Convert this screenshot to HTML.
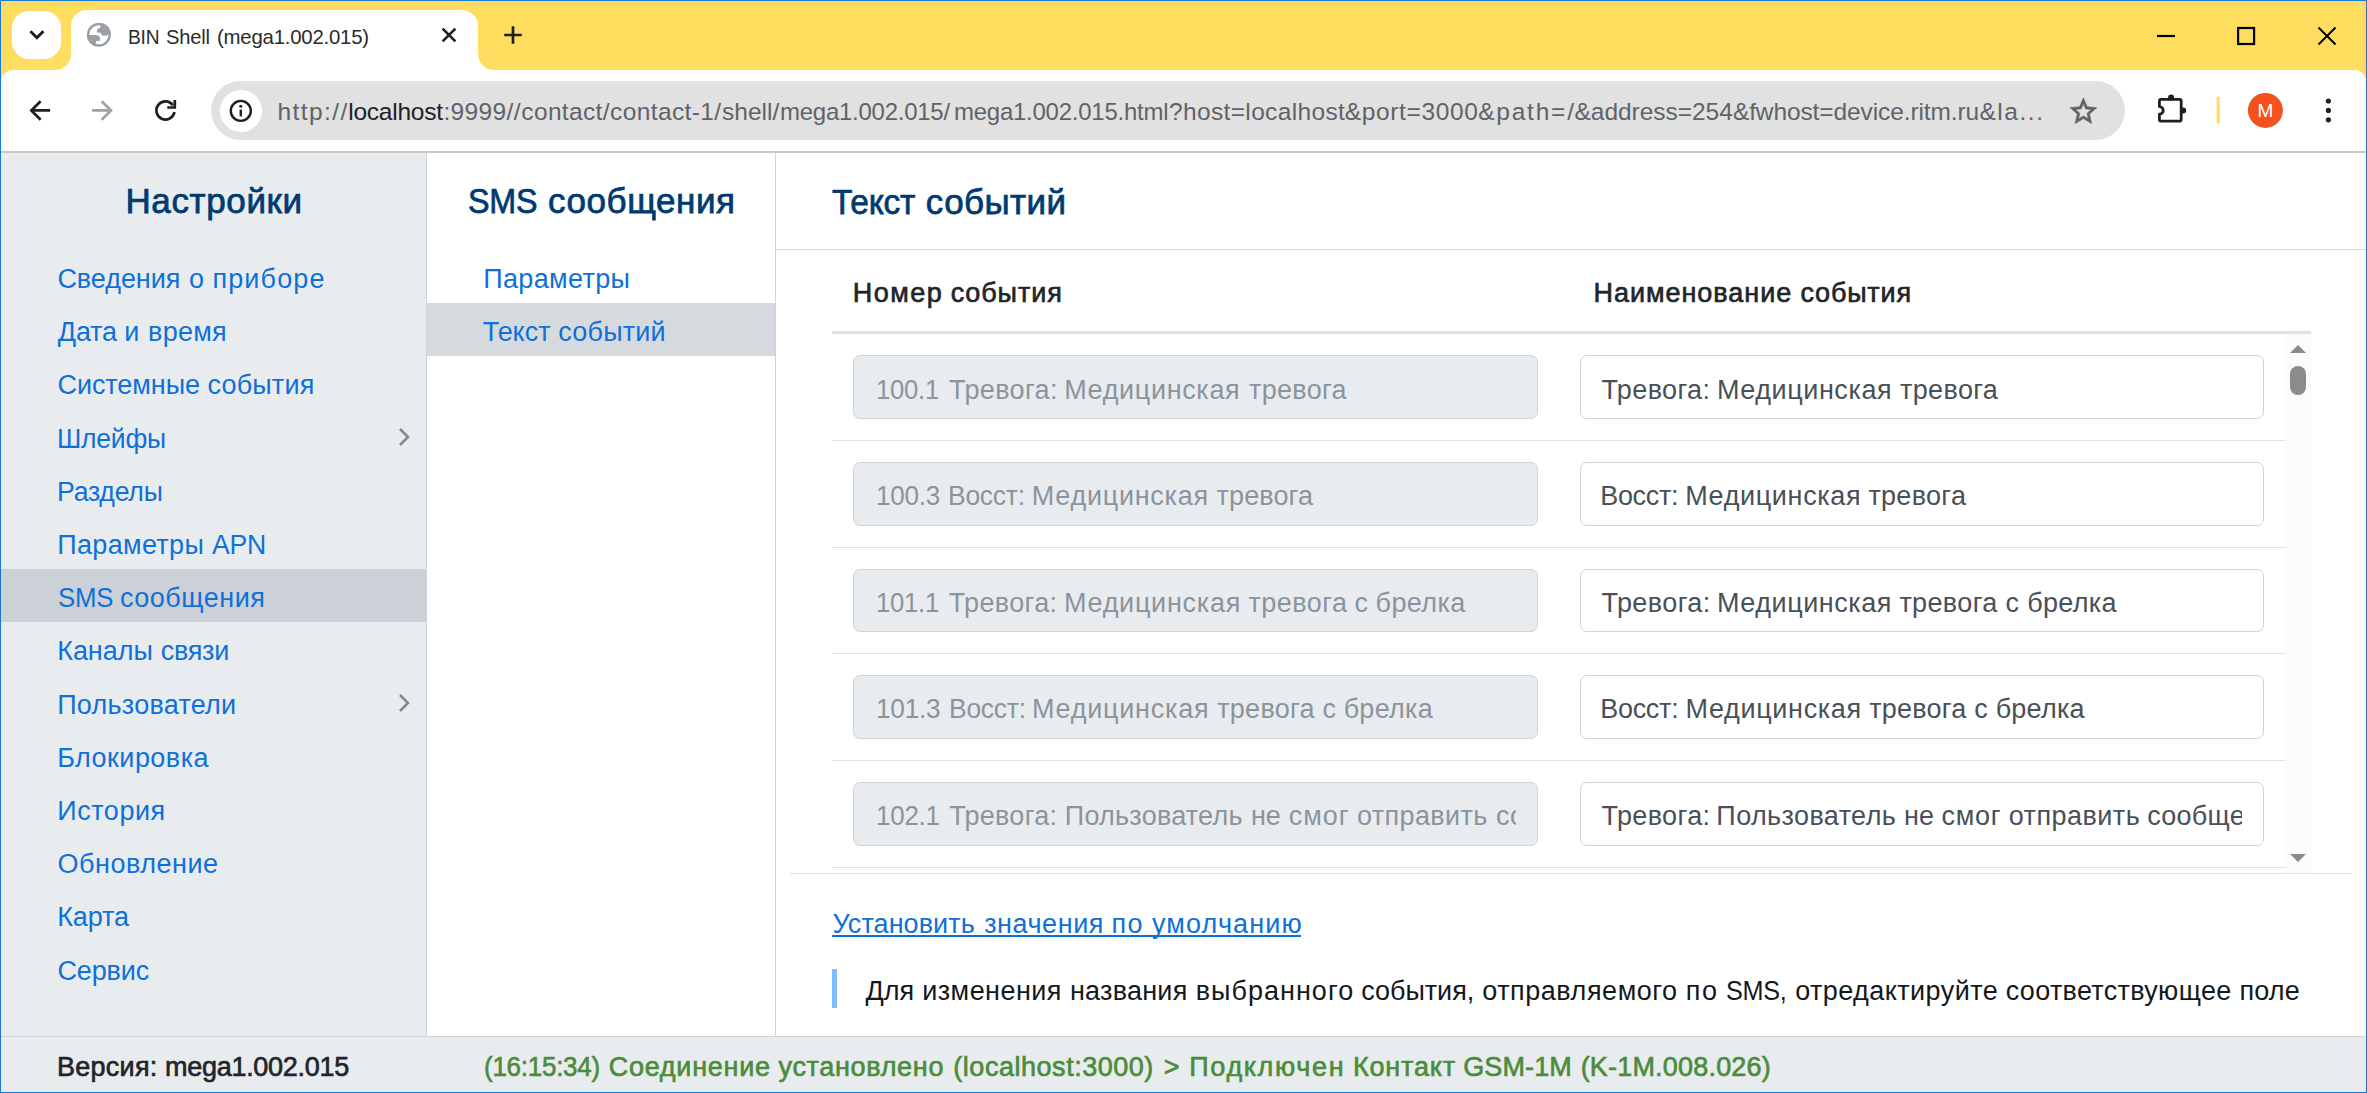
<!DOCTYPE html>
<html lang="ru">
<head>
<meta charset="utf-8">
<title>BIN Shell (mega1.002.015)</title>
<style>
*{box-sizing:border-box;margin:0;padding:0}
html,body{width:2367px;height:1093px;overflow:hidden;background:#fff}
body{position:relative;font-family:"Liberation Sans","DejaVu Sans",sans-serif;font-size:27px;color:#212529}
.abs{position:absolute}
.t{position:absolute;white-space:nowrap;line-height:1;transform-origin:0 0}
/* chrome */
#frame{position:absolute;left:0;top:0;width:2367px;height:1093px;border:1px solid #1878d2;border-top-width:1px;pointer-events:none;z-index:50}
#tabstrip{position:absolute;left:0;top:0;width:2367px;height:100px;background:#ffde5f}
#toolbar{position:absolute;left:1px;top:70px;width:2365px;height:81px;background:#fff;border-radius:12px 12px 0 0}
#tbline{position:absolute;left:1px;top:151px;width:2365px;height:2px;background:#c8c8c8}
#tabsearch{position:absolute;left:12px;top:11px;width:49px;height:48px;background:#fff;border-radius:17px}
#tab{position:absolute;left:71px;top:10px;width:407px;height:60px;background:#fff;border-radius:16px 16px 0 0}
.tabfoot{position:absolute;top:54px;width:16px;height:16px;background:radial-gradient(circle at var(--cx) 0,#ffde5f 15.5px,#fff 16.5px)}
#omni{position:absolute;left:211px;top:81px;width:1914px;height:59px;border-radius:30px;background:#e1e1e1}
#info{position:absolute;left:220px;top:90px;width:42px;height:42px;border-radius:50%;background:#fff}
/* app */
#side1{position:absolute;left:1px;top:153px;width:425px;height:883px;background:#e9ecef}
#side1b{position:absolute;left:426px;top:153px;width:1px;height:939px;background:#ced4da}
#side2b{position:absolute;left:775px;top:153px;width:1px;height:883px;background:#ced4da}
#sel1{position:absolute;left:1px;top:569px;width:425px;height:53px;background:#ccd0d7}
#sel2{position:absolute;left:427px;top:303px;width:348px;height:53px;background:#d6d9de}
#footer{position:absolute;left:1px;top:1036px;width:2365px;height:56px;background:#e9ecef;border-top:1px solid #ced4da}
.ln{position:static}
.inp{position:absolute;height:63.5px;border:1px solid #ced4da;border-radius:7px;background:#fff;overflow:hidden}
.inp.dis{background:#e9ecef}
.inp .clip{position:absolute;left:0;top:0;right:21px;bottom:0;overflow:hidden}
.rowline{position:absolute;left:832px;width:1453px;height:1px;background:#dee2e6}
</style>
</head>
<body>
<div id="tabstrip"></div>
<div id="toolbar"></div>
<div id="tbline"></div>
<div id="tabsearch"></div>
<div id="tab"></div>
<div class="tabfoot" style="left:55px;--cx:0px"></div>
<div class="tabfoot" style="left:478px;--cx:16px"></div>
<div id="omni"></div>
<div id="info"></div>
<svg class="abs" style="left:0;top:0" width="2367" height="153" viewBox="0 0 2367 153" fill="none" stroke-linecap="butt">
<!-- tab search chevron -->
<path d="M30.4 31.2 L36.9 37.7 L43.4 31.2" stroke="#1f1f1f" stroke-width="3"/>
<!-- favicon globe -->
<clipPath id="gc"><circle cx="98.9" cy="34.75" r="12"/></clipPath>
<circle cx="98.9" cy="34.75" r="12" fill="#9aa0a6"/>
<circle cx="98.9" cy="34.75" r="9.6" fill="#fff"/>
<g clip-path="url(#gc)" fill="#9aa0a6">
<path d="M100.5 22 L100.4 27.4 Q97.6 28.2 97 30 L96.8 32.4 L100.6 32.7 Q101.4 35 102.8 35.6 Q105.2 36.3 107.8 34.9 L113 35 L113 22 Z"/>
<path d="M85 35.1 L96 35.1 Q99.6 35.6 100 38.4 L100 40.8 L96.4 41 Q95.7 42 95.9 43.8 L96 48 L85 48 Z"/>
</g>
<!-- tab close -->
<path d="M442.6 28.6 L455.4 41.4 M455.4 28.6 L442.6 41.4" stroke="#1f1f1f" stroke-width="2.7"/>
<!-- new tab -->
<path d="M504.2 35 H521.8 M513 26.2 V43.8" stroke="#1f1f1f" stroke-width="2.7"/>
<!-- window controls -->
<path d="M2157 36 H2175" stroke="#000" stroke-width="2.2"/>
<rect x="2238.1" y="28" width="16" height="16" stroke="#000" stroke-width="2.2"/>
<path d="M2318.5 27.5 L2335.5 44.5 M2335.5 27.5 L2318.5 44.5" stroke="#000" stroke-width="2"/>
<!-- back -->
<path d="M50.1 110.45 H31.6 M40.6 101.2 L31.3 110.45 L40.6 119.7" stroke="#1f1f1f" stroke-width="2.7"/>
<!-- forward -->
<path d="M92.1 110.45 H110.6 M101.7 101.2 L111 110.45 L101.7 119.7" stroke="#a2a2a2" stroke-width="2.7"/>
<!-- reload -->
<path d="M174.45 112.1 A9.1 9.1 0 1 1 172.9 105.2" stroke="#1f1f1f" stroke-width="2.7"/>
<path d="M174.8 99.9 V107.5 H167.3" stroke="#1f1f1f" stroke-width="2.7"/>
<!-- info -->
<circle cx="240.8" cy="110.9" r="10" stroke="#1f1f1f" stroke-width="2.4"/>
<circle cx="240.8" cy="106.3" r="1.5" fill="#1f1f1f"/>
<path d="M240.8 109.6 V116.4" stroke="#1f1f1f" stroke-width="2.4"/>
<!-- star -->
<g transform="translate(2067.5 95.3) scale(1.325 1.34)"><path d="M22 9.24l-7.19-.62L12 2 9.19 8.63 2 9.24l5.46 4.73L5.82 21 12 17.27 18.18 21l-1.63-7.03L22 9.24zM12 15.4l-3.76 2.27 1-4.28-3.32-2.88 4.38-.38L12 6.1l1.71 4.04 4.38.38-3.32 2.88 1 4.28L12 15.4z" fill="#5f6368" stroke="#5f6368" stroke-width="0.55" stroke-linejoin="miter"/></g>
<!-- extension puzzle -->
<path d="M2161 99.3 H2179.6 A1.6 1.6 0 0 1 2181.2 100.9 V119.6 A1.6 1.6 0 0 1 2179.6 121.2 H2161 A1.6 1.6 0 0 1 2159.4 119.6 V114.2 A3.8 3.8 0 0 0 2159.4 106.6 V100.9 A1.6 1.6 0 0 1 2161 99.3 Z" stroke="#1f1f1f" stroke-width="2.8" stroke-linejoin="round"/>
<circle cx="2171.1" cy="97.4" r="3" fill="#1f1f1f"/>
<circle cx="2183.2" cy="110.4" r="3" fill="#1f1f1f"/>
<!-- separator -->
<rect x="2216.6" y="96.4" width="3.2" height="27.4" rx="1.6" fill="#ffde5f"/>
<!-- avatar -->
<circle cx="2265.4" cy="110.4" r="17.5" fill="#f4511e"/>
<!-- kebab -->
<circle cx="2328.4" cy="101" r="2.6" fill="#1f1f1f"/>
<circle cx="2328.4" cy="110.4" r="2.6" fill="#1f1f1f"/>
<circle cx="2328.4" cy="119.8" r="2.6" fill="#1f1f1f"/>
</svg>


<div id="side1"></div>
<div id="sel1"></div>
<div id="sel2"></div>
<div id="side1b"></div>
<div id="side2b"></div>
<div id="footer"></div>
<div class="abs" style="left:776px;top:249px;width:1590px;height:1px;background:#d3d8de"></div>
<div class="abs" style="left:832px;top:331px;width:1479px;height:3px;background:#dee2e6"></div>
<div class="abs" style="left:2285px;top:334px;width:26px;height:539px;background:#fbfbfb"></div>
<div class="abs" style="left:2290px;top:366px;width:16px;height:29px;border-radius:8px;background:#8b8b8b"></div>
<svg class="abs" style="left:2290px;top:344px" width="16" height="10" viewBox="0 0 16 10"><path d="M0 9 L8 1 L16 9 Z" fill="#8b8b8b"/></svg>
<svg class="abs" style="left:2290px;top:853px" width="16" height="10" viewBox="0 0 16 10"><path d="M0 1 L8 9 L16 1 Z" fill="#8b8b8b"/></svg>
<div class="abs" style="left:790px;top:873px;width:1563px;height:1px;background:#dee2e6"></div>
<div class="abs" style="left:832px;top:969px;width:5px;height:39px;background:#80bdff"></div>
<svg class="abs" style="left:397px;top:426px" width="14" height="22" viewBox="0 0 14 22"><path d="M3 3 L11 11 L3 19" fill="none" stroke="#8a8a8a" stroke-width="2.6"/></svg>
<svg class="abs" style="left:397px;top:692px" width="14" height="22" viewBox="0 0 14 22"><path d="M3 3 L11 11 L3 19" fill="none" stroke="#8a8a8a" stroke-width="2.6"/></svg>
<div class="abs" style="left:832px;top:935px;width:469px;height:2px;background:#0e70d8"></div>

<div class="rowline" style="top:440px"></div>
<div class="rowline" style="top:547px"></div>
<div class="rowline" style="top:653px"></div>
<div class="rowline" style="top:760px"></div>
<div class="rowline" style="top:867px"></div>
<div class="ln"><span class="t" style="left:125.40px;top:182.57px;font-size:35px;letter-spacing:0.631px;-webkit-text-stroke:0.75px currentColor;color:#003a70;">Настройки</span></div>
<div class="ln"><span class="t" style="left:468.20px;top:182.57px;font-size:35px;letter-spacing:-0.250px;transform:scaleX(0.9232);transform-origin:0 0;-webkit-text-stroke:0.75px currentColor;color:#003a70;">SMS</span> <span class="t" style="left:548.09px;top:182.57px;font-size:35px;letter-spacing:0.547px;-webkit-text-stroke:0.75px currentColor;color:#003a70;">сообщения</span></div>
<div class="ln"><span class="t" style="left:831.70px;top:184.37px;font-size:35px;letter-spacing:-0.250px;transform:scaleX(0.9572);transform-origin:0 0;-webkit-text-stroke:0.75px currentColor;color:#003a70;">Текст</span> <span class="t" style="left:925.86px;top:184.37px;font-size:35px;letter-spacing:0.400px;-webkit-text-stroke:0.75px currentColor;color:#003a70;">событий</span></div>
<div class="ln"><span class="t" style="left:57.44px;top:266.19px;font-size:27px;letter-spacing:-0.067px;color:#0e70d8;">Сведения</span> <span class="t" style="left:188.96px;top:266.19px;font-size:27px;letter-spacing:0.488px;color:#0e70d8;">о</span> <span class="t" style="left:212.47px;top:266.19px;font-size:27px;letter-spacing:1.134px;color:#0e70d8;">приборе</span></div>
<div class="ln"><span class="t" style="left:57.79px;top:319.39px;font-size:27px;letter-spacing:-0.187px;color:#0e70d8;">Дата</span> <span class="t" style="left:124.28px;top:319.39px;font-size:27px;letter-spacing:0.268px;color:#0e70d8;">и</span> <span class="t" style="left:148.12px;top:319.39px;font-size:27px;letter-spacing:0.268px;color:#0e70d8;">время</span></div>
<div class="ln"><span class="t" style="left:57.44px;top:371.59px;font-size:27px;letter-spacing:-0.057px;color:#0e70d8;">Системные</span> <span class="t" style="left:207.55px;top:371.59px;font-size:27px;letter-spacing:0.157px;color:#0e70d8;">события</span></div>
<div class="ln"><span class="t" style="left:57.25px;top:425.79px;font-size:27px;letter-spacing:-0.250px;transform:scaleX(0.9831);transform-origin:0 0;color:#0e70d8;">Шлейфы</span></div>
<div class="ln"><span class="t" style="left:57.23px;top:478.99px;font-size:27px;letter-spacing:-0.250px;transform:scaleX(0.9877);transform-origin:0 0;color:#0e70d8;">Разделы</span></div>
<div class="ln"><span class="t" style="left:57.23px;top:532.19px;font-size:27px;letter-spacing:0.335px;color:#0e70d8;">Параметры</span> <span class="t" style="left:211.62px;top:532.19px;font-size:27px;letter-spacing:-0.250px;transform:scaleX(0.9868);transform-origin:0 0;color:#0e70d8;">APN</span></div>
<div class="ln"><span class="t" style="left:57.67px;top:585.39px;font-size:27px;letter-spacing:-0.250px;transform:scaleX(0.9554);transform-origin:0 0;color:#0e70d8;">SMS</span> <span class="t" style="left:119.93px;top:585.39px;font-size:27px;letter-spacing:0.525px;color:#0e70d8;">сообщения</span></div>
<div class="ln"><span class="t" style="left:57.21px;top:637.59px;font-size:27px;letter-spacing:-0.045px;color:#0e70d8;">Каналы</span> <span class="t" style="left:160.72px;top:637.59px;font-size:27px;letter-spacing:-0.265px;color:#0e70d8;">связи</span></div>
<div class="ln"><span class="t" style="left:57.23px;top:691.79px;font-size:27px;letter-spacing:0.249px;color:#0e70d8;">Пользователи</span></div>
<div class="ln"><span class="t" style="left:57.21px;top:744.99px;font-size:27px;letter-spacing:0.460px;color:#0e70d8;">Блокировка</span></div>
<div class="ln"><span class="t" style="left:57.21px;top:798.19px;font-size:27px;letter-spacing:0.556px;color:#0e70d8;">История</span></div>
<div class="ln"><span class="t" style="left:57.52px;top:851.39px;font-size:27px;letter-spacing:0.512px;color:#0e70d8;">Обновление</span></div>
<div class="ln"><span class="t" style="left:57.21px;top:903.59px;font-size:27px;letter-spacing:-0.089px;color:#0e70d8;">Карта</span></div>
<div class="ln"><span class="t" style="left:57.44px;top:957.79px;font-size:27px;letter-spacing:-0.140px;color:#0e70d8;">Сервис</span></div>
<div class="ln"><span class="t" style="left:483.25px;top:266.19px;font-size:27px;letter-spacing:0.345px;color:#0e70d8;">Параметры</span></div>
<div class="ln"><span class="t" style="left:482.71px;top:319.39px;font-size:27px;letter-spacing:-0.044px;color:#0e70d8;">Текст</span> <span class="t" style="left:558.33px;top:319.39px;font-size:27px;letter-spacing:0.188px;color:#0e70d8;">событий</span></div>
<div class="ln"><span class="t" style="left:852.69px;top:280.14px;font-size:27px;letter-spacing:1.506px;-webkit-text-stroke:0.65px currentColor;color:#212529;">Номер</span> <span class="t" style="left:950.66px;top:280.14px;font-size:27px;letter-spacing:0.892px;-webkit-text-stroke:0.65px currentColor;color:#212529;">события</span></div>
<div class="ln"><span class="t" style="left:1593.54px;top:280.14px;font-size:27px;letter-spacing:0.953px;-webkit-text-stroke:0.65px currentColor;color:#212529;">Наименование</span> <span class="t" style="left:1800.47px;top:280.14px;font-size:27px;letter-spacing:0.796px;-webkit-text-stroke:0.65px currentColor;color:#212529;">события</span></div>
<div class="ln"><span class="t" style="left:832.46px;top:911.04px;font-size:27px;letter-spacing:0.066px;color:#0e70d8;">Установить</span> <span class="t" style="left:984.15px;top:911.04px;font-size:27px;letter-spacing:0.547px;color:#0e70d8;">значения</span> <span class="t" style="left:1111.53px;top:911.04px;font-size:27px;letter-spacing:1.326px;color:#0e70d8;">по</span> <span class="t" style="left:1152.02px;top:911.04px;font-size:27px;letter-spacing:1.136px;color:#0e70d8;">умолчанию</span></div>
<div class="ln"><span class="t" style="left:865.43px;top:977.74px;font-size:27px;letter-spacing:-0.007px;color:#15181b;">Для</span> <span class="t" style="left:922.28px;top:977.74px;font-size:27px;letter-spacing:0.447px;color:#15181b;">изменения</span> <span class="t" style="left:1069.94px;top:977.74px;font-size:27px;letter-spacing:0.234px;color:#15181b;">названия</span> <span class="t" style="left:1195.71px;top:977.74px;font-size:27px;letter-spacing:1.014px;color:#15181b;">выбранного</span> <span class="t" style="left:1361.36px;top:977.74px;font-size:27px;letter-spacing:-0.062px;color:#15181b;">события,</span> <span class="t" style="left:1482.19px;top:977.74px;font-size:27px;letter-spacing:0.543px;color:#15181b;">отправляемого</span> <span class="t" style="left:1685.71px;top:977.74px;font-size:27px;letter-spacing:1.769px;color:#15181b;">по</span> <span class="t" style="left:1725.51px;top:977.74px;font-size:27px;letter-spacing:-0.250px;transform:scaleX(0.9326);transform-origin:0 0;color:#15181b;">SMS,</span> <span class="t" style="left:1795.16px;top:977.74px;font-size:27px;letter-spacing:0.429px;color:#15181b;">отредактируйте</span> <span class="t" style="left:2005.73px;top:977.74px;font-size:27px;letter-spacing:0.312px;color:#15181b;">соответствующее</span> <span class="t" style="left:2239.50px;top:977.74px;font-size:27px;letter-spacing:0.112px;color:#15181b;">поле</span></div>
<div class="ln"><span class="t" style="left:56.90px;top:1053.94px;font-size:27px;letter-spacing:0.275px;-webkit-text-stroke:0.65px currentColor;color:#212529;">Версия:</span> <span class="t" style="left:165.03px;top:1053.94px;font-size:27px;letter-spacing:-0.285px;-webkit-text-stroke:0.65px currentColor;color:#212529;">mega1.002.015</span></div>
<div class="ln"><span class="t" style="left:483.96px;top:1053.94px;font-size:27px;letter-spacing:-0.250px;transform:scaleX(0.9612);transform-origin:0 0;-webkit-text-stroke:0.65px currentColor;color:#4b8c3b;">(16:15:34)</span> <span class="t" style="left:608.76px;top:1053.94px;font-size:27px;letter-spacing:0.721px;-webkit-text-stroke:0.65px currentColor;color:#4b8c3b;">Соединение</span> <span class="t" style="left:778.50px;top:1053.94px;font-size:27px;letter-spacing:0.679px;-webkit-text-stroke:0.65px currentColor;color:#4b8c3b;">установлено</span> <span class="t" style="left:953.33px;top:1053.94px;font-size:27px;letter-spacing:0.528px;-webkit-text-stroke:0.65px currentColor;color:#4b8c3b;">(localhost:3000)</span> <span class="t" style="left:1163.74px;top:1053.94px;font-size:27px;letter-spacing:0.544px;-webkit-text-stroke:0.65px currentColor;color:#4b8c3b;">&gt;</span> <span class="t" style="left:1189.28px;top:1053.94px;font-size:27px;letter-spacing:1.652px;-webkit-text-stroke:0.65px currentColor;color:#4b8c3b;">Подключен</span> <span class="t" style="left:1352.97px;top:1053.94px;font-size:27px;letter-spacing:0.802px;-webkit-text-stroke:0.65px currentColor;color:#4b8c3b;">Контакт</span> <span class="t" style="left:1463.25px;top:1053.94px;font-size:27px;letter-spacing:0.108px;-webkit-text-stroke:0.65px currentColor;color:#4b8c3b;">GSM-1M</span> <span class="t" style="left:1580.66px;top:1053.94px;font-size:27px;letter-spacing:0.193px;-webkit-text-stroke:0.65px currentColor;color:#4b8c3b;">(K-1M.008.026)</span></div>
<div class="ln"><span class="t" style="left:128.09px;top:26.32px;font-size:21px;letter-spacing:-0.250px;transform:scaleX(0.9125);transform-origin:0 0;color:#2b2b2b;">BIN</span> <span class="t" style="left:165.94px;top:26.32px;font-size:21px;letter-spacing:-0.250px;transform:scaleX(0.9601);transform-origin:0 0;color:#2b2b2b;">Shell</span> <span class="t" style="left:217.12px;top:26.32px;font-size:21px;letter-spacing:-0.250px;transform:scaleX(0.9726);transform-origin:0 0;color:#2b2b2b;">(mega1.002.015)</span></div>
<div class="ln"><span class="t" style="left:2257.60px;top:101.22px;font-size:19px;color:#ffffff;">M</span></div>
<div class="ln"><span class="t" style="left:277.57px;top:100.26px;font-size:24.5px;letter-spacing:1.416px;color:#5f6368;">http://</span><span class="t" style="left:348.23px;top:100.26px;font-size:24.5px;letter-spacing:-0.246px;color:#202124;">localhost</span><span class="t" style="left:443.47px;top:100.26px;font-size:24.5px;letter-spacing:0.345px;color:#5f6368;">:9999//</span><span class="t" style="left:521.32px;top:100.26px;font-size:24.5px;letter-spacing:0.345px;color:#5f6368;">contact/</span><span class="t" style="left:610.07px;top:100.26px;font-size:24.5px;letter-spacing:0.389px;color:#5f6368;">contact-1/</span><span class="t" style="left:721.91px;top:100.26px;font-size:24.5px;letter-spacing:0.059px;color:#5f6368;">shell/</span><span class="t" style="left:779.94px;top:100.26px;font-size:24.5px;letter-spacing:-0.250px;transform:scaleX(0.9783);transform-origin:0 0;color:#5f6368;">mega1.002.015/</span><span class="t" style="left:953.75px;top:100.26px;font-size:24.5px;letter-spacing:-0.250px;transform:scaleX(0.9787);transform-origin:0 0;color:#5f6368;">mega1.002.015.html</span><span class="t" style="left:1169.08px;top:100.26px;font-size:24.5px;letter-spacing:0.342px;color:#5f6368;">?host=localhost</span><span class="t" style="left:1344.74px;top:100.26px;font-size:24.5px;letter-spacing:0.635px;color:#5f6368;">&amp;port=3000</span><span class="t" style="left:1478.14px;top:100.26px;font-size:24.5px;letter-spacing:1.790px;color:#5f6368;">&amp;path=/</span><span class="t" style="left:1574.59px;top:100.26px;font-size:24.5px;letter-spacing:-0.046px;color:#5f6368;">&amp;address=254</span><span class="t" style="left:1732.92px;top:100.26px;font-size:24.5px;letter-spacing:-0.106px;color:#5f6368;">&amp;fwhost=device.ritm.ru</span><span class="t" style="left:1979.47px;top:100.26px;font-size:24.5px;letter-spacing:1.538px;color:#5f6368;">&amp;la...</span></div>
<div class="inp dis" style="left:853px;top:355.30px;width:685px"><div class="clip"><span class="t" style="left:21.82px;top:20.54px;font-size:27px;letter-spacing:-0.250px;transform:scaleX(0.9499);transform-origin:0 0;color:#8b949c;">100.1</span> <span class="t" style="left:95.12px;top:20.54px;font-size:27px;letter-spacing:0.364px;color:#8b949c;">Тревога:</span> <span class="t" style="left:210.18px;top:20.54px;font-size:27px;letter-spacing:0.646px;color:#8b949c;">Медицинская</span> <span class="t" style="left:395.00px;top:20.54px;font-size:27px;letter-spacing:0.313px;color:#8b949c;">тревога</span></div></div>
<div class="inp" style="left:1579.5px;top:355.30px;width:684.5px"><div class="clip"><span class="t" style="left:21.02px;top:20.54px;font-size:27px;letter-spacing:0.379px;color:#495057;">Тревога:</span> <span class="t" style="left:136.45px;top:20.54px;font-size:27px;letter-spacing:0.560px;color:#495057;">Медицинская</span> <span class="t" style="left:319.50px;top:20.54px;font-size:27px;letter-spacing:0.360px;color:#495057;">тревога</span></div></div>
<div class="inp dis" style="left:853px;top:462.05px;width:685px"><div class="clip"><span class="t" style="left:21.81px;top:20.29px;font-size:27px;letter-spacing:-0.250px;transform:scaleX(0.9640);transform-origin:0 0;color:#8b949c;">100.3</span> <span class="t" style="left:94.25px;top:20.29px;font-size:27px;letter-spacing:-0.250px;transform:scaleX(0.9796);transform-origin:0 0;color:#8b949c;">Восст:</span> <span class="t" style="left:177.82px;top:20.29px;font-size:27px;letter-spacing:0.720px;color:#8b949c;">Медицинская</span> <span class="t" style="left:362.58px;top:20.29px;font-size:27px;letter-spacing:0.117px;color:#8b949c;">тревога</span></div></div>
<div class="inp" style="left:1579.5px;top:462.05px;width:684.5px"><div class="clip"><span class="t" style="left:19.69px;top:20.29px;font-size:27px;letter-spacing:-0.308px;color:#495057;">Восст:</span> <span class="t" style="left:104.68px;top:20.29px;font-size:27px;letter-spacing:0.637px;color:#495057;">Медицинская</span> <span class="t" style="left:287.88px;top:20.29px;font-size:27px;letter-spacing:0.306px;color:#495057;">тревога</span></div></div>
<div class="inp dis" style="left:853px;top:568.80px;width:685px"><div class="clip"><span class="t" style="left:21.82px;top:20.04px;font-size:27px;letter-spacing:-0.250px;transform:scaleX(0.9499);transform-origin:0 0;color:#8b949c;">101.1</span> <span class="t" style="left:94.71px;top:20.04px;font-size:27px;letter-spacing:0.355px;color:#8b949c;">Тревога:</span> <span class="t" style="left:209.98px;top:20.04px;font-size:27px;letter-spacing:0.724px;color:#8b949c;">Медицинская</span> <span class="t" style="left:394.38px;top:20.04px;font-size:27px;letter-spacing:0.494px;color:#8b949c;">тревога</span> <span class="t" style="left:500.55px;top:20.04px;font-size:27px;letter-spacing:0.290px;color:#8b949c;">с</span> <span class="t" style="left:521.50px;top:20.04px;font-size:27px;letter-spacing:0.411px;color:#8b949c;">брелка</span></div></div>
<div class="inp" style="left:1579.5px;top:568.80px;width:684.5px"><div class="clip"><span class="t" style="left:21.02px;top:20.04px;font-size:27px;letter-spacing:0.409px;color:#495057;">Тревога:</span> <span class="t" style="left:136.45px;top:20.04px;font-size:27px;letter-spacing:0.539px;color:#495057;">Медицинская</span> <span class="t" style="left:318.88px;top:20.04px;font-size:27px;letter-spacing:0.366px;color:#495057;">тревога</span> <span class="t" style="left:424.88px;top:20.04px;font-size:27px;letter-spacing:0.338px;color:#495057;">с</span> <span class="t" style="left:446.80px;top:20.04px;font-size:27px;letter-spacing:0.295px;color:#495057;">брелка</span></div></div>
<div class="inp dis" style="left:853px;top:675.00px;width:685px"><div class="clip"><span class="t" style="left:21.79px;top:20.34px;font-size:27px;letter-spacing:-0.250px;transform:scaleX(0.9705);transform-origin:0 0;color:#8b949c;">101.3</span> <span class="t" style="left:94.69px;top:20.34px;font-size:27px;letter-spacing:-0.250px;transform:scaleX(0.9794);transform-origin:0 0;color:#8b949c;">Восст:</span> <span class="t" style="left:177.98px;top:20.34px;font-size:27px;letter-spacing:0.752px;color:#8b949c;">Медицинская</span> <span class="t" style="left:363.20px;top:20.34px;font-size:27px;letter-spacing:0.266px;color:#8b949c;">тревога</span> <span class="t" style="left:468.38px;top:20.34px;font-size:27px;letter-spacing:0.138px;color:#8b949c;">с</span> <span class="t" style="left:489.65px;top:20.34px;font-size:27px;letter-spacing:0.259px;color:#8b949c;">брелка</span></div></div>
<div class="inp" style="left:1579.5px;top:675.00px;width:684.5px"><div class="clip"><span class="t" style="left:19.69px;top:20.34px;font-size:27px;letter-spacing:-0.284px;color:#495057;">Восст:</span> <span class="t" style="left:105.05px;top:20.34px;font-size:27px;letter-spacing:0.653px;color:#495057;">Медицинская</span> <span class="t" style="left:288.72px;top:20.34px;font-size:27px;letter-spacing:0.222px;color:#495057;">тревога</span> <span class="t" style="left:393.65px;top:20.34px;font-size:27px;letter-spacing:0.222px;color:#495057;">с</span> <span class="t" style="left:415.15px;top:20.34px;font-size:27px;letter-spacing:0.241px;color:#495057;">брелка</span></div></div>
<div class="inp dis" style="left:853px;top:782.30px;width:685px"><div class="clip"><span class="t" style="left:21.81px;top:19.54px;font-size:27px;letter-spacing:-0.250px;transform:scaleX(0.9609);transform-origin:0 0;color:#8b949c;">102.1</span> <span class="t" style="left:95.31px;top:19.54px;font-size:27px;letter-spacing:0.254px;color:#8b949c;">Тревога:</span> <span class="t" style="left:210.77px;top:19.54px;font-size:27px;letter-spacing:0.229px;color:#8b949c;">Пользователь</span> <span class="t" style="left:396.94px;top:19.54px;font-size:27px;letter-spacing:-0.072px;color:#8b949c;">не</span> <span class="t" style="left:434.72px;top:19.54px;font-size:27px;letter-spacing:0.957px;color:#8b949c;">смог</span> <span class="t" style="left:502.96px;top:19.54px;font-size:27px;letter-spacing:0.376px;color:#8b949c;">отправить</span> <span class="t" style="left:641.96px;top:19.54px;font-size:27px;letter-spacing:0.153px;color:#8b949c;">сообщение</span></div></div>
<div class="inp" style="left:1579.5px;top:782.30px;width:684.5px"><div class="clip"><span class="t" style="left:21.02px;top:19.54px;font-size:27px;letter-spacing:0.387px;color:#495057;">Тревога:</span> <span class="t" style="left:135.83px;top:19.54px;font-size:27px;letter-spacing:0.391px;color:#495057;">Пользователь</span> <span class="t" style="left:323.41px;top:19.54px;font-size:27px;letter-spacing:0.248px;color:#495057;">не</span> <span class="t" style="left:361.05px;top:19.54px;font-size:27px;letter-spacing:0.693px;color:#495057;">смог</span> <span class="t" style="left:428.23px;top:19.54px;font-size:27px;letter-spacing:0.464px;color:#495057;">отправить</span> <span class="t" style="left:566.66px;top:19.54px;font-size:27px;letter-spacing:0.274px;color:#495057;">сообщение</span></div></div>
<div id="frame"></div>
</body>
</html>
